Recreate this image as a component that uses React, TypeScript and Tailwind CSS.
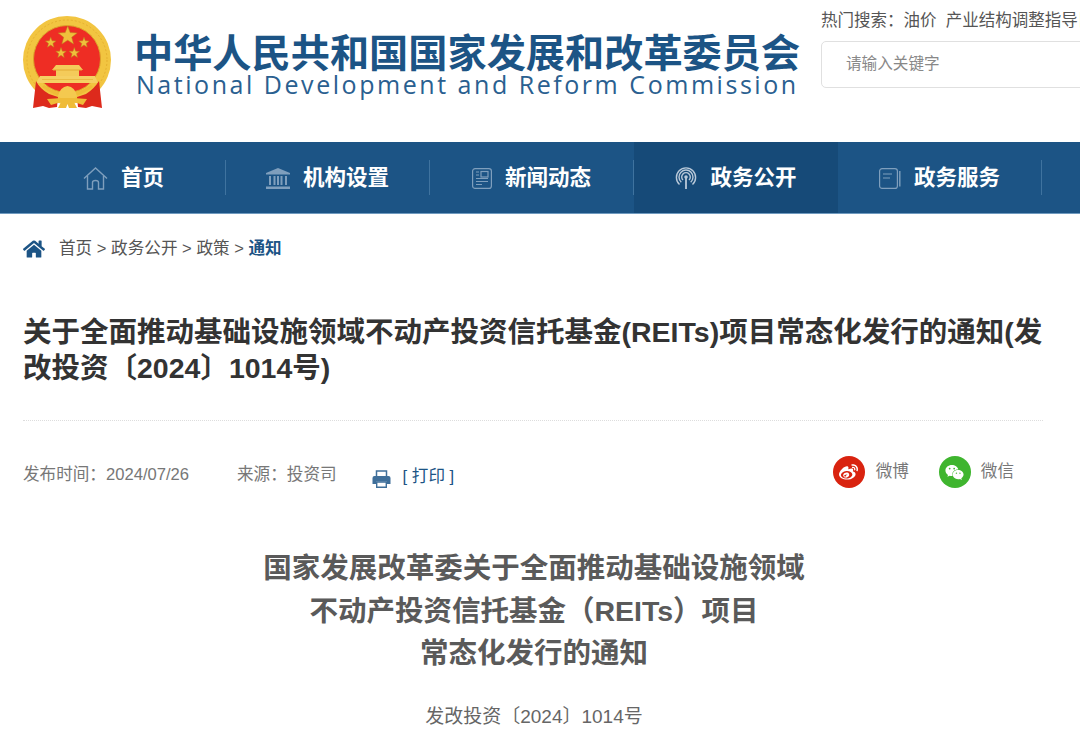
import { FaHome, FaWeibo, FaWeixin } from "react-icons/fa";
import type { ReactNode } from "react";

const FONT = "font-['Liberation_Sans','Noto_Sans_CJK_SC',sans-serif]";

function Star({ x, y, r }: { x: number; y: number; r: number }) {
  const points = Array.from({ length: 10 }, (_, i) => {
    const radius = i % 2 === 0 ? r : r * 0.42;
    const angle = -Math.PI / 2 + (i * Math.PI) / 5;
    return `${x + radius * Math.cos(angle)},${y + radius * Math.sin(angle)}`;
  }).join(" ");
  return <polygon points={points} fill="#f0c03c" stroke="#b9821c" strokeWidth="0.5" />;
}

function Emblem() {
  return (
    <svg width="90" height="96" viewBox="0 0 90 96" className="shrink-0">
      <circle cx="45" cy="45" r="44" fill="#f2c541" />
      <circle cx="45" cy="45" r="40" fill="none" stroke="#e6b030" strokeWidth="1" strokeDasharray="2 2" />
      <circle cx="45" cy="44" r="33.5" fill="#ee2d24" stroke="#dba22a" strokeWidth="1" />
      <Star x={45.7} y={21} r={10} />
      <Star x={28.7} y={27.7} r={5.5} />
      <Star x={62} y={27.7} r={5.5} />
      <Star x={39} y={38} r={5.5} />
      <Star x={52.3} y={38} r={5.5} />
      {/* gate tower */}
      <path d="M34 50 L57 50 L61 55 L57 55 L57 62 L34 62 L34 55 L30 55 Z" fill="#f4cb5a" />
      <path d="M31 55 H60" stroke="#e2ab34" strokeWidth="1" />
      <path d="M18 61 L73 61 L76 68 L14 68 Z" fill="#f5d063" />
      <path d="M20 64.5 H71" stroke="#e8b53c" strokeWidth="0.8" />
      {/* ribbons */}
      <path d="M14 66 Q18 74 27 79 L36 82 L35 92 L27 93 L21 91 L11 93 Z" fill="#dd2a1c" />
      <path d="M77 66 Q72 74 64 79 L55 82 L56 92 L64 93 L70 91 L80 93 Z" fill="#dd2a1c" />
      <path d="M22 70 Q45 86 69 70 L71 72 Q45 92 20 72 Z" fill="#efbb37" />
      <path d="M36 81 Q38 72 45.5 71 Q53 72 55 81 L51 84 H40 Z" fill="#f4c94f" />
      <path d="M25 84 L40 83 H51 L65 84 L61 90 L52 87 L55 93 H47 L45.5 89 L44 93 H36 L39 87 L29 90 Z" fill="#efbb37" />
    </svg>
  );
}

function IconHome() {
  return (
    <svg width="25" height="23" viewBox="0 0 25 23" fill="none" stroke="#7f9fbd" strokeWidth="1.4">
      <path d="M1 11.5 L12.5 1 L24 11.5" />
      <path d="M4.5 9 V22 H9.5 V15.5 Q9.5 13.5 12.5 13.5 Q15.5 13.5 15.5 15.5 V22 H20.5 V9" />
    </svg>
  );
}

function IconBank() {
  return (
    <svg width="24" height="21" viewBox="0 0 24 21" fill="#7f9fbd">
      <path d="M12 0 L24 5 V6.5 H0 V5 Z" />
      <rect x="3" y="8" width="2" height="9" />
      <rect x="7.5" y="8" width="2" height="9" />
      <rect x="14.5" y="8" width="2" height="9" />
      <rect x="19" y="8" width="2" height="9" />
      <rect x="11" y="8" width="2" height="9" />
      <rect x="0" y="18.5" width="24" height="2.5" />
    </svg>
  );
}

function IconNews() {
  return (
    <svg width="20" height="21" viewBox="0 0 20 21" fill="none" stroke="#7f9fbd" strokeWidth="1.2">
      <rect x="0.6" y="0.6" width="18.8" height="19.8" rx="2.5" />
      <rect x="9" y="3.5" width="7" height="5.5" />
      <path d="M4 4 H7 M4 7 H7 M4 10.5 H16 M4 13.5 H16 M4 16.5 H10" />
    </svg>
  );
}

function IconSignal() {
  return (
    <svg width="22" height="22" viewBox="0 0 22 22" fill="none" stroke="#b9c9d9" strokeWidth="1.4">
      <path d="M4.5 17.5 A9.6 9.6 0 1 1 17.5 17.5" />
      <path d="M6.3 15.2 A7 7 0 1 1 15.7 15.2" />
      <path d="M8 13 A4.3 4.3 0 1 1 14 13" />
      <circle cx="11" cy="10" r="1.8" fill="#b9c9d9" stroke="none" />
      <path d="M11 10 V22" strokeWidth="1.8" />
    </svg>
  );
}

function IconBook() {
  return (
    <svg width="22" height="21" viewBox="0 0 22 21" fill="none" stroke="#7f9fbd" strokeWidth="1.2">
      <rect x="0.6" y="0.6" width="17.8" height="19.8" rx="2.5" />
      <path d="M20.8 3 V18.5" strokeWidth="1.4" />
      <path d="M4 6 H13 M4 10 H11" />
    </svg>
  );
}

function IconPrint() {
  return (
    <svg width="19" height="18" viewBox="0 0 19 18" className="ml-[35px] mt-[7px] shrink-0">
      <path d="M4.5 6.5 V1 H14.5 V6.5" fill="none" stroke="#3f6f9a" strokeWidth="1.5" />
      <path d="M2.5 6 H16.5 Q18.5 6 18.5 8 V14 H15 V11.5 H4 V14 H0.5 V8 Q0.5 6 2.5 6 Z" fill="#3f6f9a" />
      <path d="M4.7 12 H14.3 V17.2 H4.7 Z" fill="none" stroke="#3f6f9a" strokeWidth="1.4" />
    </svg>
  );
}

const NAV: { label: string; icon: ReactNode; active?: boolean; divider?: boolean }[] = [
  { label: "首页", icon: <IconHome />, divider: true },
  { label: "机构设置", icon: <IconBank />, divider: true },
  { label: "新闻动态", icon: <IconNews />, divider: true },
  { label: "政务公开", icon: <IconSignal />, active: true },
  { label: "政务服务", icon: <IconBook />, divider: true },
];

export default function App() {
  return (
    <div className={`${FONT} h-[746px] w-[1080px] overflow-hidden bg-white`}>
      <header className="flex h-[142px]">
        <div className="flex w-[821px] shrink-0 items-start pl-[22px] pt-[15px]">
          <Emblem />
          <div className="ml-[22px] mt-[21px] whitespace-nowrap">
            <div className="text-[39.2px] font-bold leading-[36px] text-[#1c5485]">中华人民共和国国家发展和改革委员会</div>
            <div className="ml-[2px] font-['Open_Sans',sans-serif] text-[25px] leading-[24px] tracking-[2.54px] text-[#2a6090]">
              National Development and Reform Commission
            </div>
          </div>
        </div>
        <div className="min-w-0 flex-1 pt-[8px]">
          <div className="whitespace-nowrap text-[16.5px] leading-[24px] text-[#555]">
            热门搜索：油价&nbsp; 产业结构调整指导目录
          </div>
          <div className="mt-[9px] flex h-[47px] w-[400px] items-center rounded-[5px] border border-[#e0e0e0] pb-[2px] pl-[24px] text-[15.6px] text-[#888]">
            请输入关键字
          </div>
        </div>
      </header>

      <nav className="flex h-[72px] border-b border-[#6f9abf] bg-[#1c5485] pl-[22px]">
        {NAV.map((item) => (
          <div key={item.label} className={`flex w-[204px] ${item.active ? "bg-[#164a78]" : ""}`}>
            <div className="flex flex-1 items-center justify-center gap-[13px] pt-[1px]">
              {item.icon}
              <span className="text-[21.5px] font-bold text-white">{item.label}</span>
            </div>
            {item.divider && <div className="my-[18px] w-px bg-[#3f739f]" />}
          </div>
        ))}
      </nav>

      <div className="flex h-[70px] items-center pl-[23px]">
        <FaHome className="mr-[14px] text-[22px] text-[#1c5485]" />
        <div className="text-[16.6px] text-[#555]">
          首页 &gt; 政务公开 &gt; 政策 &gt; <span className="font-bold text-[#1c5485]">通知</span>
        </div>
      </div>

      <div className="px-[23px] pt-[30px]">
        <h1 className="w-[1020px] border-b border-dotted border-[#ddd] pb-[34px] text-[28.5px] font-bold leading-[36px] text-[#333]">
          关于全面推动基础设施领域不动产投资信托基金(REITs)项目常态化发行的通知(发改投资〔2024〕1014号)
        </h1>
        <div className="flex h-[70px] w-[1020px] items-center pt-[39px] text-[16.6px] text-[#777]">
          <span>发布时间：2024/07/26</span>
          <span className="ml-[48px]">来源：投资司</span>
          <IconPrint />
          <span className="ml-[12px] mt-[4px] text-[#1c5485]">[ 打印 ]</span>
          <div className="ml-auto mr-[29px] mt-[-7px] flex items-center">
            <span className="flex size-[32px] items-center justify-center rounded-full bg-[#d9230f] text-[19px] text-white">
              <FaWeibo />
            </span>
            <span className="ml-[11px]">微博</span>
            <span className="ml-[30px] flex size-[32px] items-center justify-center rounded-full bg-[#3fb52f] text-[19px] text-white">
              <FaWeixin />
            </span>
            <span className="ml-[10px]">微信</span>
          </div>
        </div>
      </div>

      <div className="mt-[56px] pr-[12px] text-center text-[28.5px] font-bold leading-[42.5px] text-[#5a5a5a]">
        <div>国家发展改革委关于全面推动基础设施领域</div>
        <div>不动产投资信托基金（REITs）项目</div>
        <div>常态化发行的通知</div>
      </div>
      <div className="mt-[27px] pr-[12px] text-center text-[19px] leading-[30px] text-[#666]">发改投资〔2024〕1014号</div>
    </div>
  );
}
